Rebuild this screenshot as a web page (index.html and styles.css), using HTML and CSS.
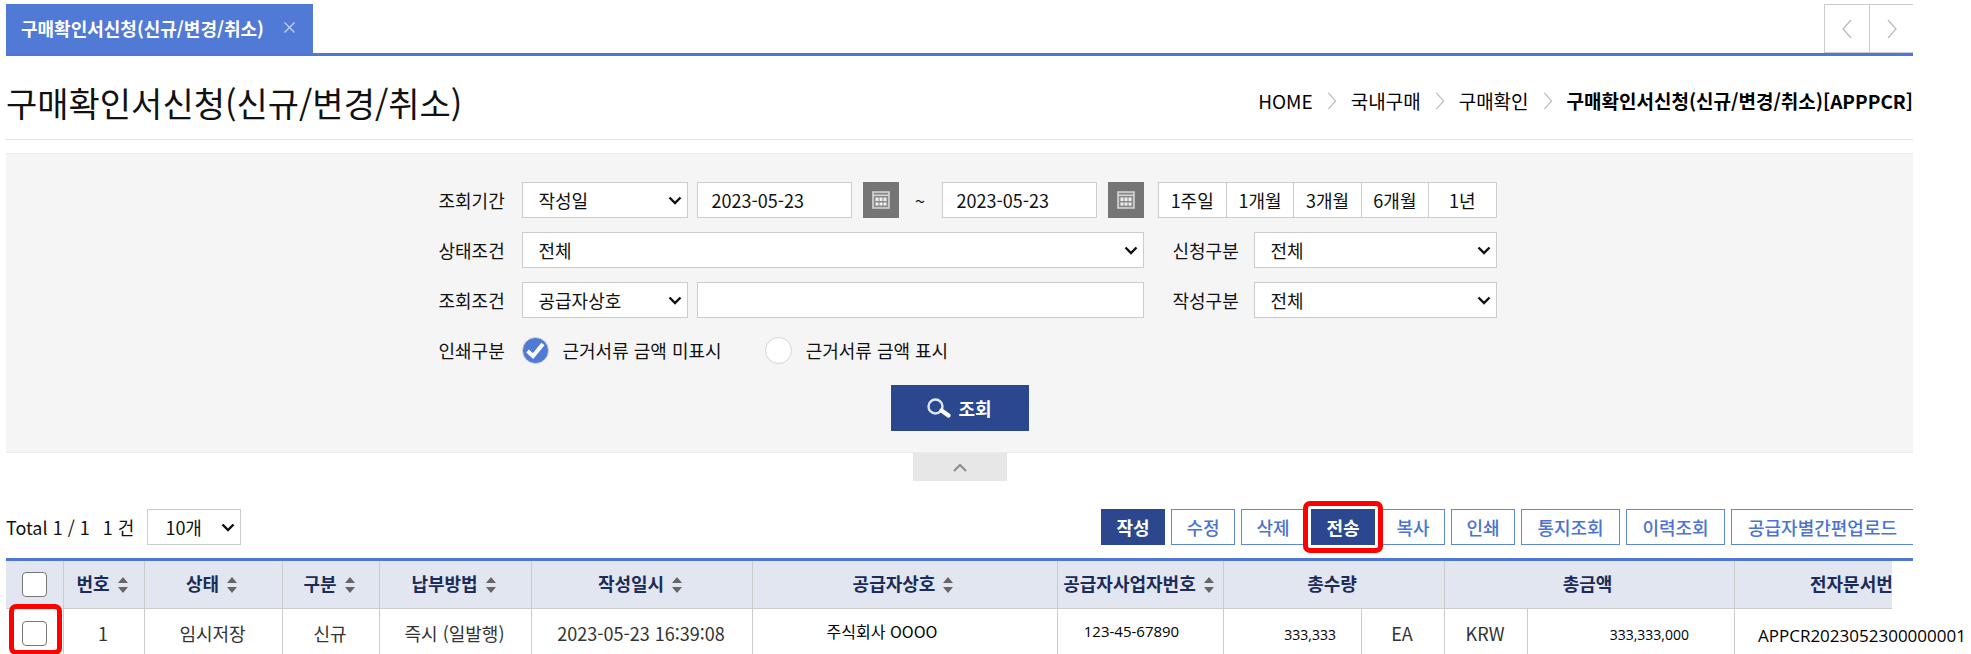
FILE: index.html
```html
<!DOCTYPE html>
<html lang="ko">
<head>
<meta charset="utf-8">
<title>구매확인서신청(신규/변경/취소)</title>
<link rel="stylesheet" href="styles.css">
</head>
<body>
<svg class="defs" aria-hidden="true">
  <symbol id="calendar" viewBox="0 0 18 18">
    <path d="M1 1h16v16H1z" fill="#8a8a8a" stroke="#d6d6d6" stroke-width="1.6"/>
    <path d="M1 4.3h16" stroke="#d6d6d6" stroke-width="1.4"/>
    <path d="M3.500 6.500h3v3.500h-3zM7.500 6.500h3v3.500h-3zM11.500 6.500h3v3.500h-3zM3.500 11.500h3v3h-3zM7.500 11.500h3v3h-3zM11.500 11.500h3v3h-3z" fill="#eee"/>
  </symbol>
  <symbol id="sort" viewBox="0 0 10 18">
    <path d="M5 1l5 6H0zM5 17l5-6H0z" fill="#666"/>
  </symbol>
  <symbol id="next" viewBox="0 0 10 20">
    <path d="M1 1l8 9-8 9" fill="none" stroke="#bbb" stroke-width="1.300"/>
  </symbol>
</svg>
<main class="page">
  <nav class="tabs">
    <div class="tab"><a href="#">구매확인서신청(신규/변경/취소)</a>
      <button class="tab-close" type="button" aria-label="닫기"><svg width="11" height="11" viewBox="0 0 11 11"><path d="M.5.5l10 10M10.500.5l-10 10" stroke="#c5d3f5" stroke-width="1.200"/></svg></button>
    </div>
    <div class="tab-nav">
      <button type="button" aria-label="이전"><svg class="flip" width="12" height="20"><use href="#next"/></svg></button>
      <button type="button" aria-label="다음"><svg width="12" height="20"><use href="#next"/></svg></button>
    </div>
  </nav>

  <header class="head">
    <h1>구매확인서신청(신규/변경/취소)</h1>
    <nav class="crumbs">
      <a href="#">HOME</a><svg width="10" height="18"><use href="#next"/></svg>
      <a href="#">국내구매</a><svg width="10" height="18"><use href="#next"/></svg>
      <a href="#">구매확인</a><svg width="10" height="18"><use href="#next"/></svg>
      <strong>구매확인서신청(신규/변경/취소)[APPPCR]</strong>
    </nav>
  </header>

  <form class="search">
    <div class="fields">
      <label for="period">조회기간</label>
      <div class="line">
        <select id="period" class="kind"><option>작성일</option></select>
        <input class="date" type="text" value="2023-05-23" aria-label="시작일">
        <button class="cal" type="button" aria-label="시작일 선택"><svg width="18" height="18"><use href="#calendar"/></svg></button>
        <span class="tilde">~</span>
        <input class="date" type="text" value="2023-05-23" aria-label="종료일">
        <button class="cal" type="button" aria-label="종료일 선택"><svg width="18" height="18"><use href="#calendar"/></svg></button>
      </div>
      <div class="ranges">
        <button type="button">1주일</button><button type="button">1개월</button><button type="button">3개월</button><button type="button">6개월</button><button type="button">1년</button>
      </div>

      <label for="state">상태조건</label>
      <select id="state"><option>전체</option></select>
      <div class="side"><label for="apply">신청구분</label><select id="apply"><option>전체</option></select></div>

      <label for="cond">조회조건</label>
      <div class="line">
        <select id="cond" class="kind"><option>공급자상호</option></select>
        <input class="keyword" type="text" aria-label="검색어">
      </div>
      <div class="side"><label for="write">작성구분</label><select id="write"><option>전체</option></select></div>

      <span>인쇄구분</span>
      <div class="line radios">
        <label><input type="radio" name="print" checked>근거서류 금액 미표시</label>
        <label><input type="radio" name="print">근거서류 금액 표시</label>
      </div>
    </div>
    <button class="submit" type="button"><svg width="24" height="20" viewBox="0 0 24 20"><circle cx="8.500" cy="8.500" r="7" fill="none" stroke="#dfe5f3" stroke-width="2.400"/><path d="M14.500 12.500l7 5" stroke="#fff" stroke-width="4.200" stroke-linecap="round"/></svg>조회</button>
  </form>
  <button class="collapse" type="button" aria-label="접기"><svg width="14" height="9" viewBox="0 0 14 9"><path d="M1 8l6-6 6 6" fill="none" stroke="#8c8c8c" stroke-width="2"/></svg></button>

  <div class="toolbar">
    <span class="total">Total 1 / 1</span><span class="count">1 건</span>
    <select class="size" aria-label="페이지 크기"><option>10개</option></select>
    <div class="actions">
      <button class="solid" type="button">작성</button>
      <button type="button">수정</button>
      <button type="button">삭제</button>
      <button class="solid marked" type="button">전송</button>
      <button type="button">복사</button>
      <button type="button">인쇄</button>
      <button class="wide" type="button">통지조회</button>
      <button class="wide" type="button">이력조회</button>
      <button class="open" type="button">공급자별간편업로드</button>
    </div>
  </div>

  <div class="grid">
    <table>
      <colgroup>
        <col class="c-check"><col class="c-no"><col class="c-state"><col class="c-kind"><col class="c-pay"><col class="c-date"><col><col class="c-biz"><col class="c-qty"><col class="c-unit"><col class="c-unit"><col class="c-sum"><col class="c-doc">
      </colgroup>
      <thead>
        <tr>
          <th><input type="checkbox" aria-label="전체 선택"></th>
          <th>번호<svg width="10" height="18"><use href="#sort"/></svg></th>
          <th>상태<svg width="10" height="18"><use href="#sort"/></svg></th>
          <th>구분<svg width="10" height="18"><use href="#sort"/></svg></th>
          <th>납부방법<svg width="10" height="18"><use href="#sort"/></svg></th>
          <th>작성일시<svg width="10" height="18"><use href="#sort"/></svg></th>
          <th>공급자상호<svg width="10" height="18"><use href="#sort"/></svg></th>
          <th>공급자사업자번호<svg width="10" height="18"><use href="#sort"/></svg></th>
          <th colspan="2">총수량</th>
          <th colspan="2">총금액</th>
          <th class="doc">전자문서번</th>
        </tr>
      </thead>
      <tbody>
        <tr>
          <td class="pick"><input type="checkbox" aria-label="1번 선택"></td>
          <td>1</td>
          <td>임시저장</td>
          <td>신규</td>
          <td>즉시 (일발행)</td>
          <td>2023-05-23 16:39:08</td>
          <td class="name">주식회사 OOOO</td>
          <td class="biz">123-45-67890</td>
          <td class="amount">333,333</td>
          <td>EA</td>
          <td>KRW</td>
          <td class="amount sum">333,333,000</td>
          <td class="docno">APPCR2023052300000001</td>
        </tr>
      </tbody>
    </table>
  </div>
</main>
</body>
</html>
```
FILE: styles.css
```css
* { box-sizing: border-box; }

body {
  margin: 0;
  background: #fff;
  color: #111;
  font: 18px/26px "Noto Sans CJK KR", sans-serif;
}

button, input, select { font: inherit; color: inherit; margin: 0; }
button { display: flex; align-items: center; justify-content: center; padding: 0; border: 0; background: none; }
a { color: inherit; text-decoration: none; }
svg { flex: none; }
.defs { display: none; }
.flip { transform: scaleX(-1); }

.page { margin: 4px 58px 0 6px; }

/* Tabs */
.tabs { display: flex; justify-content: space-between; border-bottom: 3px solid #4d76d7; }
.tab {
  display: flex;
  align-items: center;
  gap: 20px;
  height: 49px;
  padding: 0 18px 2px 15px;
  background: #5179d6;
  color: #fff;
  font-weight: 700;
}
.tab-nav { display: flex; border: 1px solid #ccc; border-right: 0; }
.tab-nav button { width: 44px; }
.tab-nav button + button { border-left: 1px solid #ccc; }

/* Page heading */
.head {
  display: flex;
  align-items: center;
  justify-content: space-between;
  height: 84px;
  padding-top: 10px;
  border-bottom: 1px solid #e3e3e3;
}
h1 { margin: 0; font-size: 34px; line-height: 48px; font-weight: 400; }
.crumbs { display: flex; align-items: center; gap: 14px; padding-bottom: 3px; font-size: 19px; color: #000; }
.crumbs strong { font-weight: 700; }

/* Search panel */
.search {
  display: flex;
  flex-direction: column;
  align-items: center;
  gap: 17px;
  margin-top: 13px;
  padding: 28px 0 21px;
  border: solid #ebebeb;
  border-width: 1px 0;
  background: #f5f5f5;
}
.fields {
  display: grid;
  grid-template-columns: 83px 622px 353px;
  grid-auto-rows: 36px;
  row-gap: 14px;
  align-items: center;
  padding-left: 16px;
}
.line { display: flex; align-items: center; height: 36px; }

select, input[type="text"] { height: 36px; border: 1px solid #ccc; border-radius: 0; background: #fff; }
input[type="text"] { padding: 0 14px; }
select {
  appearance: none;
  width: 100%;
  padding: 0 30px 0 16px;
  background: #fff url("data:image/svg+xml,%3Csvg xmlns='http://www.w3.org/2000/svg' width='14' height='9' viewBox='0 0 14 9'%3E%3Cpath d='M1.500 1.500L7 7l5.500-5.500' fill='none' stroke='%23111' stroke-width='2.400'/%3E%3C/svg%3E") no-repeat right 5px center;
}
select.kind { width: 166px; margin-right: 9px; }
input.date { width: 155px; margin-right: 11px; }
.cal { width: 36px; height: 36px; background: #757575; }
.tilde { width: 43px; text-align: center; }
.keyword { flex: 1; }

.ranges { display: grid; grid-template-columns: repeat(5, 1fr); height: 36px; margin-left: 14px; border: 1px solid #ccc; background: #fff; }
.ranges button + button { border-left: 1px solid #ccc; }
.side { display: flex; align-items: center; margin-left: 29px; }
.side label { width: 81px; flex: none; }

.radios { gap: 43px; }
.radios label { display: flex; align-items: center; gap: 14px; }
input[type="radio"] {
  appearance: none;
  width: 27px;
  height: 27px;
  border: 1px solid #d4d4d4;
  border-radius: 50%;
  background: #fff;
}
input[type="radio"]:checked {
  background: #5179d6 url("data:image/svg+xml,%3Csvg xmlns='http://www.w3.org/2000/svg' viewBox='0 0 26 26'%3E%3Cpath d='M5 13.500l5.500 5L20.500 6.500' fill='none' stroke='%23fff' stroke-width='4'/%3E%3C/svg%3E") center / 26px;
}
.submit { gap: 7px; width: 138px; height: 46px; background: #2b488f; color: #fff; font-weight: 700; }
.collapse { width: 94px; height: 28px; margin: 0 auto; background: #e7e7e7; }

/* Toolbar */
.toolbar { display: flex; align-items: center; height: 36px; margin: 28px 0 13px; }
.count { margin: 0 13px; }
.size { width: 94px; padding: 0 0 0 17px; flex: none; }
.actions { display: flex; gap: 6px; margin-left: auto; }
.actions button {
  width: 64px;
  height: 36px;
  padding-bottom: 1px;
  border: 1px solid #5f85dc;
  color: #4a73d2;
  font-weight: 500;
}
.actions .wide { width: 99px; }
.actions .open { width: 182px; padding: 0 14px 1px; border-right: 0; white-space: nowrap; }
.actions .solid { border-color: #2b488f; background: #2b488f; color: #fff; font-weight: 700; }
.actions .marked { position: relative; z-index: 1; box-shadow: 0 0 0 3px #fff; }
.marked::after {
  content: "";
  position: absolute;
  inset: -9px;
  border: 5px solid #f00;
  border-radius: 7px;
}

/* Result grid */
.grid { border-top: 3px solid #4d76d7; padding-right: 21px; }
table { width: 100%; table-layout: fixed; border-collapse: separate; border-spacing: 0; }
.c-check { width: 58px; }
.c-no { width: 81px; }
.c-state { width: 138px; }
.c-kind { width: 97px; }
.c-pay { width: 152px; }
.c-date { width: 221px; }
.c-biz { width: 166px; }
.c-qty { width: 138px; }
.c-unit { width: 83px; }
.c-sum { width: 207px; }
.c-doc { width: 157px; }
th, td { padding: 0; border-right: 1px solid #ccc; white-space: nowrap; text-align: center; vertical-align: middle; }
th { height: 48px; padding: 0 4px 3px 0; border-bottom: 1px solid #ccc; background: #e2e6f1; color: #1c2c58; font-weight: 700; }
th svg { margin-left: 8px; vertical-align: -3px; }
td { height: 46px; padding: 1px 2px 0 0; color: #333; }
th:last-child, td:last-child { border-right: 0; }
th.doc { padding-left: 75px; overflow: hidden; text-align: left; }
th:first-child { padding-right: 0; }
input[type="checkbox"] {
  appearance: none;
  display: block;
  width: 25px;
  height: 25px;
  margin: 2px auto 0;
  border: 1px solid #767676;
  border-radius: 4px;
  background: #fff;
}
.pick { position: relative; padding-right: 0; }
.pick::after {
  content: "";
  position: absolute;
  inset: -5px 1px 0 3px;
  border: 5px solid #f00;
  border-radius: 7px;
  pointer-events: none;
}
.name, .biz, .amount, .docno { color: #000; }
.name { font-size: 16px; padding: 0 46px 2px 0; }
.biz { padding: 0 18px 2px 0; font: 15px/20px "Open Sans", sans-serif; }
.amount { padding: 6px 25px 0 0; font: 14px/20px "Open Sans", sans-serif; text-align: right; }
.sum { padding-right: 45px; }
.docno { padding: 8px 0 0 23px; font: 17px/20px "Open Sans", sans-serif; text-align: left; }
```
